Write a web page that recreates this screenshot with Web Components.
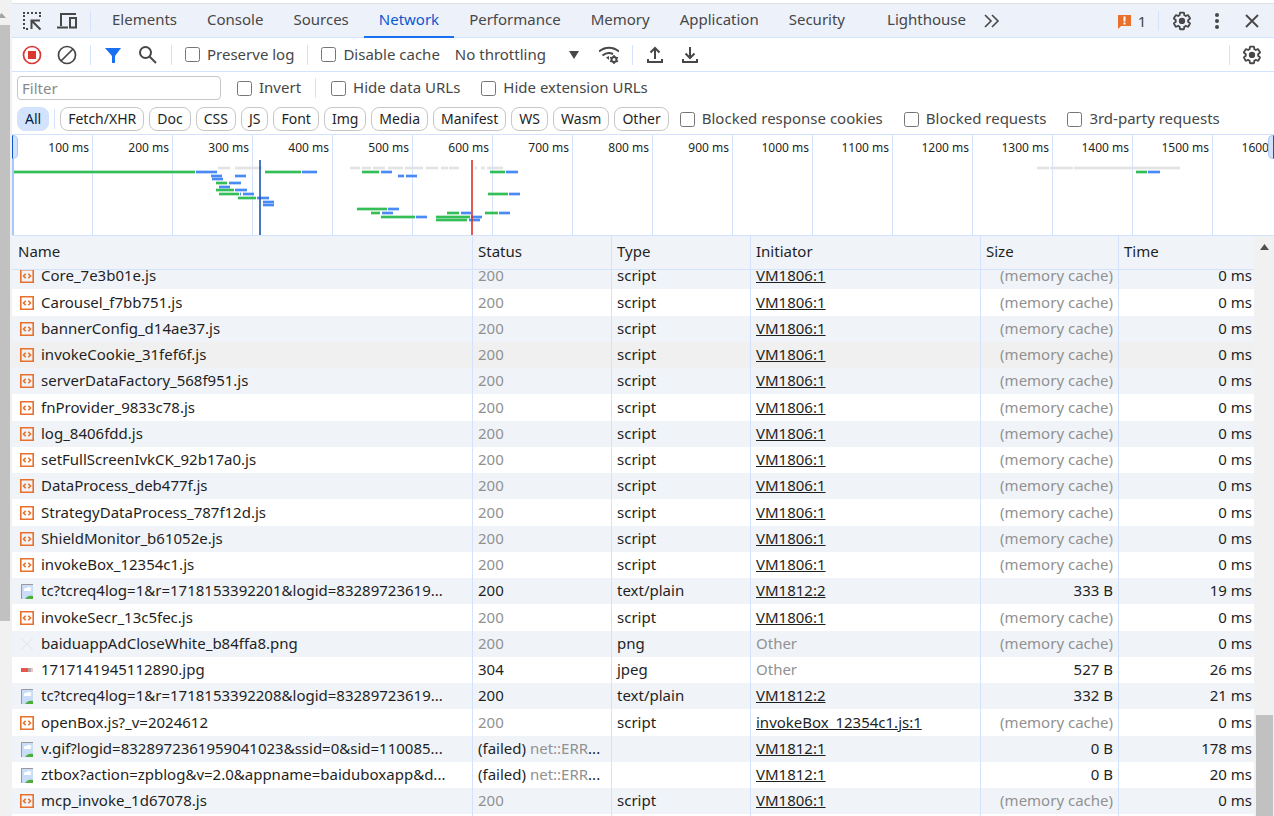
<!DOCTYPE html>
<html lang="en">
<head>
<meta charset="utf-8">
<title>DevTools - Network</title>
<style>
  html, body { height: 100%; }
  body {
    margin: 0;
    overflow: hidden;
    background: #fff;
    color: #1f1f1f;
    font-family: "Noto Sans", "Open Sans", sans-serif;
    font-size: 15px;
    --line: #d3e3fd;
    --bar: #edf1fa;
    --icon: #474747;
  }
</style>
</head>
<body>
<network-app></network-app>

<script>
  const ICONS = {
    inspect: `<g fill="none" stroke="currentColor" stroke-width="2"><path stroke-dasharray="2 2" d="M1 2h18M2 4v14M18 4v4M4 18h4"/><path d="M18.500 18.500L10 10M9.500 18V9.500H18"/></g>`,
    device: `<path fill="none" stroke="currentColor" stroke-width="2" d="M19 3H4v12M0 16.500h11M13 7h6v9.500h-6z"/>`,
    record: `<circle cx="10" cy="10" r="8.500" fill="none" stroke="#dc362e" stroke-width="1.700"/><path fill="#dc362e" d="M6 6h8v8H6z"/>`,
    clear: `<g fill="none" stroke="currentColor" stroke-width="1.700"><circle cx="10" cy="10" r="8.500"/><path d="M4 16L16 4"/></g>`,
    filter: `<path fill="#1a6ef0" d="M2 3h16l-6 8v7H9v-7z"/>`,
    search: `<g fill="none" stroke="currentColor" stroke-width="2"><circle cx="7.500" cy="7.500" r="5.500"/><path d="M11.500 11.500l6.500 6.500"/></g>`,
    wifi: `<g fill="none" stroke="currentColor" stroke-width="2"><path d="M0 6.500c6-5 14-5 20 0M3.500 10.500c3-2.500 7-3.200 10.500-1.500"/><circle cx="15" cy="14.500" r="2.500"/></g><path fill="currentColor" d="M7 12.500l3-1.500v4z"/><path stroke="currentColor" stroke-width="1.500" d="M15 10v2M15 17v2M11 12.300l1.700 1M17.300 15.700l1.700 1M11 16.700l1.700-1M17.300 13.300l1.700-1"/>`,
    upload: `<path fill="none" stroke="currentColor" stroke-width="2" d="M10 14V3M5.500 7.500L10 3l4.500 4.500M3 14v3h14v-3"/>`,
    download: `<path fill="none" stroke="currentColor" stroke-width="2" d="M10 2v11M5.500 8.500L10 13l4.500-4.500M3 14v3h14v-3"/>`,
    more: `<path fill="none" stroke="currentColor" stroke-width="1.600" d="M3 4l6 6-6 6M10 4l6 6-6 6"/>`,
    dots: `<g fill="currentColor"><circle cx="10" cy="4" r="2"/><circle cx="10" cy="10" r="2"/><circle cx="10" cy="16" r="2"/></g>`,
    close: `<path fill="none" stroke="currentColor" stroke-width="1.800" d="M4 4l12 12M16 4L4 16"/>`,
    gear: `<g transform="scale(.83)"><path fill="none" stroke="currentColor" stroke-width="2.200" d="M19.430 12.980c.04-.32.07-.64.07-.98s-.03-.66-.07-.98l2.110-1.650c.19-.15.24-.42.12-.64l-2-3.460c-.12-.22-.39-.3-.61-.22l-2.490 1c-.52-.4-1.080-.73-1.690-.98l-.38-2.650C14.460 2.180 14.250 2 14 2h-4c-.25 0-.46.18-.49.42l-.38 2.650c-.61.25-1.170.59-1.690.98l-2.490-1c-.23-.09-.49 0-.61.22l-2 3.460c-.13.22-.07.49.12.64l2.110 1.650c-.04.32-.07.65-.07.98s.03.66.07.98l-2.110 1.650c-.19.15-.24.42-.12.64l2 3.460c.12.22.39.3.61.22l2.490-1c.52.4 1.080.73 1.690.98l.38 2.650c.03.24.24.42.49.42h4c.25 0 .46-.18.49-.42l.38-2.650c.61-.25 1.170-.59 1.690-.98l2.490 1c.23.09.49 0 .61-.22l2-3.460c.12-.22.07-.49-.12-.64z"/><circle cx="12" cy="12" r="3.800" fill="currentColor"/></g>`,
    issue: `<path fill="#e8702a" d="M4 4h13v11H7l-3 3z"/><path fill="#fff" d="M9.500 5.500h2v5h-2zM9.500 11.500h2v2h-2z"/>`,
    script: `<path fill="none" stroke="#e8702a" stroke-width="1.600" d="M3.800 3.800h12.400v12.400H3.800z"/><path fill="none" stroke="#e8702a" stroke-width="1.600" d="M8.700 7.700L6.500 10l2.200 2.300M11.300 7.700l2.200 2.300-2.200 2.300"/>`,
    file: `<path fill="#c9dcf8" d="M4 3h12v15H4z"/><path fill="#fff" d="M7 9a2 2 0 0 1 3-2 2 2 0 0 1 4 2v1H7z"/><path fill="#4caf3a" d="M8 18c2-3 5-4 8-3v3z"/><path fill="none" stroke="#999" d="M4.500 18V3.500H16"/>`,
    png: `<path fill="none" stroke="#e2e5ea" d="M4 4l12 12M16 4L4 16"/>`,
    jpg: `<path fill="#e8554d" d="M4 8h7v4H4z"/><path fill="#b5a7a7" d="M11 8h3v4h-3z"/><path fill="#f3c5bd" d="M14 8h2v4h-2z"/>`
  };

  class DtIcon extends HTMLElement {
    constructor() {
      super();
      this.attachShadow({ mode: 'open' });
    }

    connectedCallback() {
      this.shadowRoot.innerHTML = `
        <style>
          :host { display: inline-block; flex: none; width: 20px; height: 20px; }
          svg { display: block; width: 100%; height: 100%; }
        </style>
        <svg viewBox="0 0 20 20" aria-hidden="true">${ICONS[this.getAttribute('name')]}</svg>
      `;
    }
  }
  customElements.define('dt-icon', DtIcon);

  class IconButton extends HTMLElement {
    constructor() {
      super();
      this.attachShadow({ mode: 'open' });
    }

    connectedCallback() {
      this.shadowRoot.innerHTML = `
        <style>
          :host { display: block; flex: none; }
          button {
            display: flex;
            align-items: center;
            justify-content: center;
            gap: 4px;
            min-width: 35px;
            height: 32px;
            padding: 0 1px 0 0;
            border: 0;
            background: none;
            color: var(--icon);
            font: inherit;
          }
        </style>
        <button type="button" aria-label="${this.getAttribute('label')}">
          <dt-icon name="${this.getAttribute('icon')}"></dt-icon><slot></slot>
        </button>
      `;
    }
  }
  customElements.define('icon-button', IconButton);

  class BarDivider extends HTMLElement {
    constructor() {
      super();
      this.attachShadow({ mode: 'open' });
      this.shadowRoot.innerHTML = `
        <style>
          :host { display: block; flex: none; width: 1px; height: 20px; background: var(--line); }
        </style>
      `;
    }
  }
  customElements.define('bar-divider', BarDivider);

  class PanelTabs extends HTMLElement {
    constructor() {
      super();
      this.attachShadow({ mode: 'open' });
      const tabs = ['Elements', 'Console', 'Sources', 'Network', 'Performance', 'Memory', 'Application', 'Security', 'Lighthouse'];
      this.shadowRoot.innerHTML = `
        <style>
          :host {
            display: flex;
            align-items: center;
            height: 33px;
            padding: 0 4px 0 3px;
            border-top: 1px solid #dde1e6;
            border-bottom: 1px solid var(--line);
            background: var(--bar);
          }
          .tools { margin-left: 5px; }
          nav { display: flex; align-self: stretch; margin-left: 6px; }
          button {
            height: 34px;
            padding: 0 15px 4px;
            border: 0;
            background: none;
            color: #474747;
            font: inherit;
          }
          button.on { padding-bottom: 2px; border-bottom: 2px solid #1a6ef0; color: #0b57d0; }
          button:last-child { margin-left: 12px; padding-right: 9px; }
          .end { display: flex; align-items: center; margin-left: auto; }
          .menu { margin: 0 6px 0 10px; }
        </style>
        <icon-button icon="inspect" label="Inspect"></icon-button>
        <icon-button icon="device" label="Device toolbar"></icon-button>
        <bar-divider class="tools"></bar-divider>
        <nav>${tabs.map(t => `<button type="button" class="${t === 'Network' ? 'on' : ''}">${t}</button>`).join('')}</nav>
        <icon-button icon="more" label="More tabs"></icon-button>
        <div class="end">
          <icon-button icon="issue" label="Issues">1</icon-button>
          <bar-divider class="menu"></bar-divider>
          <icon-button icon="gear" label="Settings"></icon-button>
          <icon-button icon="dots" label="Customize"></icon-button>
          <icon-button icon="close" label="Close"></icon-button>
        </div>
      `;
    }
  }
  customElements.define('panel-tabs', PanelTabs);

  class CheckOption extends HTMLElement {
    constructor() {
      super();
      this.attachShadow({ mode: 'open' });
      this.shadowRoot.innerHTML = `
        <style>
          :host { display: block; flex: none; }
          label { display: flex; align-items: center; gap: 7px; color: #474747; white-space: nowrap; }
          input { width: 15px; height: 15px; margin: 0; }
          span { padding-bottom: 2px; }
        </style>
        <label><input type="checkbox"><span><slot></slot></span></label>
      `;
    }
  }
  customElements.define('check-option', CheckOption);

  class NetworkToolbar extends HTMLElement {
    constructor() {
      super();
      this.attachShadow({ mode: 'open' });
      this.shadowRoot.innerHTML = `
        <style>
          :host {
            display: flex;
            align-items: center;
            height: 33px;
            padding: 0 4px 0 3px;
            border-bottom: 1px solid var(--line);
          }
          .first { margin: 0 5px; }
          .checks { margin: 0 13px 0 5px; }
          .gap { margin-right: 8px; }
          .throttle { display: flex; align-items: center; margin-left: 15px; }
          select {
            width: 120px;
            padding: 0 0 2px;
            border: 0;
            appearance: none;
            background: none;
            color: #474747;
            font: inherit;
          }
          .throttle svg { width: 10px; height: 8px; margin-left: -6px; pointer-events: none; }
          .wifi { margin-left: 13px; }
          .end { display: flex; align-items: center; margin-left: auto; }
        </style>
        <icon-button icon="record" label="Stop recording"></icon-button>
        <icon-button icon="clear" label="Clear"></icon-button>
        <bar-divider class="first"></bar-divider>
        <icon-button icon="filter" label="Filter"></icon-button>
        <icon-button icon="search" label="Search"></icon-button>
        <bar-divider class="checks"></bar-divider>
        <check-option class="gap">Preserve log</check-option>
        <bar-divider class="checks"></bar-divider>
        <check-option>Disable cache</check-option>
        <div class="throttle">
          <select aria-label="Throttling"><option>No throttling</option></select>
          <svg viewBox="0 0 10 8"><path fill="#474747" d="M0 0h10L5 8z"/></svg>
        </div>
        <icon-button class="wifi" icon="wifi" label="Network conditions"></icon-button>
        <bar-divider class="first"></bar-divider>
        <icon-button icon="upload" label="Import HAR"></icon-button>
        <icon-button icon="download" label="Export HAR"></icon-button>
        <div class="end">
          <bar-divider class="first"></bar-divider>
          <icon-button icon="gear" label="Network settings"></icon-button>
        </div>
      `;
    }
  }
  customElements.define('network-toolbar', NetworkToolbar);

  class FilterChip extends HTMLElement {
    constructor() {
      super();
      this.attachShadow({ mode: 'open' });
      this.shadowRoot.innerHTML = `
        <style>
          :host { display: block; flex: none; }
          button {
            box-sizing: border-box;
            height: 24px;
            padding: 0 7px;
            border: 1px solid #c7c7c7;
            border-radius: 8px;
            background: #fff;
            color: #1f1f1f;
            font: inherit;
            font-size: 14px;
            line-height: 22px;
          }
          :host([selected]) button { border-color: var(--line); background: var(--line); color: #041e49; }
        </style>
        <button type="button"><slot></slot></button>
      `;
    }
  }
  customElements.define('filter-chip', FilterChip);

  class FilterBar extends HTMLElement {
    constructor() {
      super();
      this.attachShadow({ mode: 'open' });
      const types = ['Fetch/XHR', 'Doc', 'CSS', 'JS', 'Font', 'Img', 'Media', 'Manifest', 'WS', 'Wasm', 'Other'];
      this.shadowRoot.innerHTML = `
        <style>
          :host { display: block; padding-left: 5px; }
          div { display: flex; align-items: center; height: 32px; }
          .types { gap: 5px; height: 30px; }
          input {
            box-sizing: border-box;
            width: 204px;
            height: 24px;
            margin-right: 16px;
            padding: 0 4px;
            border: 1px solid #c7c7c7;
            border-radius: 4px;
            font: inherit;
          }
          input::placeholder { color: #8a8a8a; }
          .split { margin: 0 15px 0 14px; }
          .wide { margin-left: 21px; }
          .types check-option { margin-left: 6px; }
          .types check-option + check-option { margin-left: 16px; }
        </style>
        <div>
          <input type="text" placeholder="Filter" aria-label="Filter">
          <check-option>Invert</check-option>
          <bar-divider class="split"></bar-divider>
          <check-option>Hide data URLs</check-option>
          <check-option class="wide">Hide extension URLs</check-option>
        </div>
        <div class="types">
          <filter-chip selected>All</filter-chip>
          <bar-divider></bar-divider>
          ${types.map(t => `<filter-chip>${t}</filter-chip>`).join('')}
          <check-option>Blocked response cookies</check-option>
          <check-option>Blocked requests</check-option>
          <check-option>3rd-party requests</check-option>
        </div>
      `;
    }
  }
  customElements.define('filter-bar', FilterBar);

  // [start, end, y] for every bar of the overview, one list per phase
  const BARS = {
    '#e3e3e3': [[206, 218, 33], [223, 250, 33], [338, 348, 33], [350, 359, 33], [361, 373, 33], [376, 391, 33], [393, 411, 33], [414, 426, 33], [429, 436, 33], [437, 447, 33], [463, 465, 33], [469, 473, 33], [475, 480, 33], [481, 491, 33], [1025, 1037, 33], [1038, 1061, 33], [1062, 1168, 33]],
    '#34be58': [[2, 183, 37], [204, 215, 48], [204, 222, 55], [207, 227, 59], [226, 244, 63], [253, 289, 37], [350, 367, 37], [345, 375, 74], [359, 368, 78], [369, 403, 82], [435, 447, 78], [424, 458, 82], [424, 455, 85], [478, 493, 37], [476, 496, 59], [473, 486, 78], [1124, 1135, 37]],
    '#4a8af4': [[184, 205, 37], [199, 210, 41], [223, 234, 41], [200, 211, 44], [217, 229, 48], [207, 218, 52], [223, 235, 55], [228, 229, 59], [231, 242, 59], [245, 257, 63], [251, 262, 67], [251, 262, 70], [290, 305, 37], [369, 380, 37], [386, 392, 41], [394, 405, 41], [376, 387, 74], [370, 381, 78], [404, 415, 82], [449, 459, 78], [459, 470, 82], [457, 468, 85], [494, 506, 37], [497, 508, 59], [487, 498, 78], [1136, 1148, 37]]
  };

  class RequestOverview extends HTMLElement {
    constructor() {
      super();
      this.attachShadow({ mode: 'open' });
      let marks = '';
      for (let ms = 100; ms <= 1500; ms += 100) marks += `<span>${ms} ms</span>`;
      let bars = '';
      for (const [color, list] of Object.entries(BARS)) {
        for (const [from, to, y] of list) {
          bars += `<path stroke="${color}" stroke-opacity=".35" stroke-width="4" d="M${from} ${y}H${to}"/><path stroke="${color}" stroke-width="2" d="M${from} ${y}H${to}"/>`;
        }
      }
      this.shadowRoot.innerHTML = `
        <style>
          :host {
            display: block;
            position: relative;
            height: 100px;
            overflow: hidden;
            border-top: 1px solid var(--line);
            border-bottom: 1px solid var(--line);
            font-size: 12px;
          }
          .marks { display: flex; height: 100%; margin-left: 1px; }
          span {
            box-sizing: border-box;
            flex: none;
            width: 80px;
            padding: 4px 3px 0 0;
            border-right: 1px solid var(--line);
            line-height: 17px;
            text-align: right;
          }
          span:last-child { width: 59px; border: 0; }
          svg { position: absolute; top: 0; left: 0; width: 100%; height: 100px; }
          i {
            position: absolute;
            top: 0;
            box-sizing: border-box;
            width: 6px;
            height: 24px;
            border: 1px solid #a8c7fa;
            background: var(--line);
          }
          .from { left: 0; border-left-color: #0b57d0; border-radius: 0 5px 5px 0; }
          .to { right: 0; border-right-color: #0b57d0; border-radius: 5px 0 0 5px; }
        </style>
        <div class="marks">${marks}<span>1600</span></div>
        <svg>
          <path stroke="#a8c7fa" stroke-width="2" d="M1 24V100"/>
          ${bars}
          <path stroke="#1a56b0" stroke-opacity=".8" stroke-width="2" d="M248 25V100"/>
          <path stroke="#d93025" stroke-opacity=".8" stroke-width="2" d="M460 25V100"/>
        </svg>
        <i class="from"></i><i class="to"></i>
      `;
    }
  }
  customElements.define('request-overview', RequestOverview);

  const cached = name => ({ icon: 'script', name, status: '200', dim: true, type: 'script', from: 'VM1806:1', size: '(memory cache)', time: '0 ms' });
  const REQUESTS = [
    cached('Core_7e3b01e.js'),
    cached('Carousel_f7bb751.js'),
    cached('bannerConfig_d14ae37.js'),
    { ...cached('invokeCookie_31fef6f.js'), hover: true },
    cached('serverDataFactory_568f951.js'),
    cached('fnProvider_9833c78.js'),
    cached('log_8406fdd.js'),
    cached('setFullScreenIvkCK_92b17a0.js'),
    cached('DataProcess_deb477f.js'),
    cached('StrategyDataProcess_787f12d.js'),
    cached('ShieldMonitor_b61052e.js'),
    cached('invokeBox_12354c1.js'),
    { icon: 'file', name: 'tc?tcreq4log=1&amp;r=1718153392201&amp;logid=83289723619...', status: '200', type: 'text/plain', from: 'VM1812:2', size: '333 B', time: '19 ms' },
    cached('invokeSecr_13c5fec.js'),
    { ...cached('baiduappAdCloseWhite_b84ffa8.png'), icon: 'png', type: 'png', from: '' },
    { icon: 'jpg', name: '1717141945112890.jpg', status: '304', type: 'jpeg', from: '', size: '527 B', time: '26 ms' },
    { icon: 'file', name: 'tc?tcreq4log=1&amp;r=1718153392208&amp;logid=83289723619...', status: '200', type: 'text/plain', from: 'VM1812:2', size: '332 B', time: '21 ms' },
    { ...cached('openBox.js?_v=2024612'), from: 'invokeBox_12354c1.js:1' },
    { icon: 'file', name: 'v.gif?logid=8328972361959041023&amp;ssid=0&amp;sid=110085...', status: '(failed) <small>net::ERR</small>...', type: '', from: 'VM1812:1', size: '0 B', time: '178 ms' },
    { icon: 'file', name: 'ztbox?action=zpblog&amp;v=2.0&amp;appname=baiduboxapp&amp;d...', status: '(failed) <small>net::ERR</small>...', type: '', from: 'VM1812:1', size: '0 B', time: '20 ms' },
    cached('mcp_invoke_1d67078.js')
  ];

  class RequestTable extends HTMLElement {
    constructor() {
      super();
      this.attachShadow({ mode: 'open' });
      const rows = REQUESTS.map(r => `
        <tr class="${r.hover ? 'hover' : ''}">
          <td><div><dt-icon name="${r.icon}"></dt-icon><span>${r.name}</span></div></td>
          <td class="${r.dim ? 'dim' : ''}">${r.status}</td>
          <td>${r.type}</td>
          <td>${r.from ? `<a href="#">${r.from}</a>` : '<small>Other</small>'}</td>
          <td class="num ${r.dim ? 'dim' : ''}">${r.size}</td>
          <td class="num">${r.time}</td>
        </tr>`).join('');
      this.shadowRoot.innerHTML = `
        <style>
          :host { display: flex; flex: 1; min-height: 0; }
          .scroll { flex: 1; min-width: 0; overflow: hidden; }
          table { width: 100%; table-layout: fixed; border-collapse: separate; border-spacing: 0; }
          .status, .type { width: 139px; }
          .from { width: 230px; }
          .size { width: 138px; }
          .time { width: 135px; }
          th, td {
            box-sizing: border-box;
            padding: 0 5px 2px;
            border-right: 1px solid var(--line);
            white-space: nowrap;
            overflow: hidden;
          }
          th {
            position: sticky;
            top: 0;
            z-index: 1;
            height: 34px;
            padding-bottom: 4px;
            border-bottom: 1px solid var(--line);
            background: #f0f4f9;
            font-weight: 400;
            text-align: left;
          }
          th:last-child, td:last-child { border-right: 0; }
          td { height: 26px; line-height: 20px; }
          th:first-child { padding-left: 6px; }
          tr:nth-child(4n + 2) td { height: 27px; }
          tbody tr:nth-child(odd) { background: #f0f4f9; }
          tbody tr.hover { background: #f0f0f0; }
          td:first-child { padding-bottom: 0; }
          td div { display: flex; align-items: center; gap: 4px; }
          td span { padding-bottom: 2px; }
          .num { text-align: right; }
          td:last-child { padding-right: 2px; }
          .dim, small { color: #919191; }
          small { font-size: inherit; }
          a { color: inherit; }
          .rail { display: flex; flex-direction: column; width: 17px; padding: 8px 1px 0 2px; background: #f1f1f1; }
          .rail svg { width: 9px; height: 6px; margin-left: 4px; }
          .thumb { margin-top: auto; height: 101px; background: #c1c1c1; }
        </style>
        <div class="scroll">
          <table>
            <colgroup><col><col class="status"><col class="type"><col class="from"><col class="size"><col class="time"></colgroup>
            <thead><tr><th>Name</th><th>Status</th><th>Type</th><th>Initiator</th><th>Size</th><th>Time</th></tr></thead>
            <tbody>${rows}<tr><td></td><td></td><td></td><td></td><td></td><td></td></tr></tbody>
          </table>
        </div>
        <div class="rail"><svg viewBox="0 0 9 6"><path fill="#505050" d="M0 6l4.500-6L9 6z"/></svg><div class="thumb"></div></div>
      `;
    }

    connectedCallback() {
      // The list is scrolled a little past its first row
      this.shadowRoot.querySelector('.scroll').scrollTop = 7;
    }
  }
  customElements.define('request-table', RequestTable);

  class NetworkApp extends HTMLElement {
    constructor() {
      super();
      this.attachShadow({ mode: 'open' });
      this.shadowRoot.innerHTML = `
        <style>
          :host { display: flex; height: 100vh; }
          .page-rail { flex: none; width: 12px; background: #f1f1f1; }
          .page-rail svg { display: block; width: 7px; height: 5px; padding: 13px 0 7px; }
          .page-rail div { width: 10px; height: 73vh; background: #c1c1c1; }
          main { display: flex; flex: 1; flex-direction: column; min-width: 0; padding-top: 3px; }
        </style>
        <div class="page-rail">
          <svg viewBox="0 0 7 5"><path fill="#a3a3a3" d="M-3 5l4.500-5L6 5z"/></svg>
          <div></div>
        </div>
        <main>
          <panel-tabs></panel-tabs>
          <network-toolbar></network-toolbar>
          <filter-bar></filter-bar>
          <request-overview></request-overview>
          <request-table></request-table>
        </main>
      `;
    }
  }
  customElements.define('network-app', NetworkApp);
</script>
</body>
</html>
